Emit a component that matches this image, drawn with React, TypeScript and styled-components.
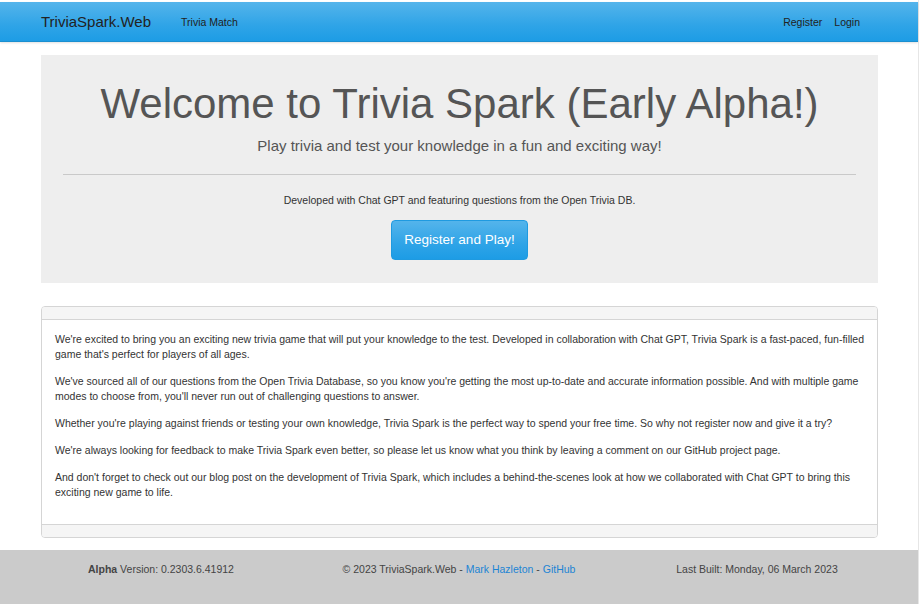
import React from "react";
import styled, { createGlobalStyle } from "styled-components";

const Global = createGlobalStyle`
  html, body { margin: 0; padding: 0; background: #fff; }
  body { font-family: "Liberation Sans", Arial, sans-serif; color: #333; }
  * { box-sizing: border-box; }
`;

const Page = styled.div`
  width: 919px;
  min-height: 604px;
  border-right: 1px solid #e6e6e6;
  padding-top: 2px;
  display: flex;
  flex-direction: column;
`;

const NavBar = styled.header`
  height: 40px;
  background: linear-gradient(to bottom, #54b4eb 0%, #2fa4e7 60%, #1d9ce5 100%);
  border-bottom: 1px solid #1a8fd0;
  box-shadow: 0 1px 2px rgba(0, 0, 0, 0.12);
  display: flex;
  align-items: center;
  padding: 0 58px 0 41px;
`;

const Brand = styled.a`
  font-size: 15px;
  color: #222;
  text-decoration: none;
  margin-right: 30px;
`;

const NavLink = styled.a`
  font-size: 10.5px;
  color: #222;
  text-decoration: none;
`;

const NavRight = styled.nav`
  margin-left: auto;
  display: flex;
  gap: 12px;
`;

const Container = styled.main`
  width: 837px;
  margin: 13px 0 0 41px;
  display: flex;
  flex-direction: column;
  gap: 23px;
`;

const Jumbotron = styled.section`
  background: #eeeeee;
  padding: 25px 22px 23px;
  display: flex;
  flex-direction: column;
  align-items: center;
  color: #555;
`;

const Title = styled.h1`
  margin: 0;
  font-size: 42px;
  font-weight: 400;
  line-height: 48px;
  color: #555;
`;

const Lead = styled.p`
  margin: 7px 0 0;
  font-size: 15px;
  line-height: 22px;
  color: #555;
`;

const Rule = styled.hr`
  width: 100%;
  border: 0;
  border-top: 1px solid #c9c9c9;
  margin: 17px 0 0;
`;

const Small = styled.p`
  margin: 17px 0 0;
  font-size: 10.5px;
  line-height: 16px;
  color: #333;
`;

const CTA = styled.button`
  margin-top: 12px;
  height: 40px;
  padding: 0 12px 1px;
  border-radius: 4px;
  border: 1px solid #1f9ae0;
  background: linear-gradient(to bottom, #54b4eb 0%, #2fa4e7 60%, #1d9ce5 100%);
  color: #fff;
  font-family: "Liberation Sans", Arial, sans-serif;
  font-size: 13.5px;
`;

const Panel = styled.section`
  border: 1px solid #d5d5d5;
  border-radius: 4px;
  background: #fff;
  display: flex;
  flex-direction: column;
  overflow: hidden;
`;

const PanelBar = styled.div<{ $top?: boolean }>`
  height: 13px;
  background: #f5f5f5;
  border-${(p) => (p.$top ? "bottom" : "top")}: 1px solid #d5d5d5;
`;

const PanelBody = styled.div`
  padding: 12px 13px 24px;
  display: flex;
  flex-direction: column;
  gap: 12px;
`;

const Para = styled.p`
  margin: 0;
  font-size: 10.5px;
  line-height: 15px;
  color: #333;
`;

const Footer = styled.footer`
  margin-top: 12px;
  background: #cbcbcb;
  height: 56px;
  display: grid;
  grid-template-columns: repeat(3, 298px);
  justify-content: center;
  padding-top: 12px;
  font-size: 10.5px;
  line-height: 14px;
  color: #444;
`;

const FootCol = styled.div`
  text-align: center;
`;

const FootLink = styled.a`
  color: #1c84d4;
  text-decoration: none;
`;

export default function App() {
  return (
    <>
      <Global />
      <Page>
        <NavBar>
          <Brand href="#">TriviaSpark.Web</Brand>
          <NavLink href="#">Trivia Match</NavLink>
          <NavRight>
            <NavLink href="#">Register</NavLink>
            <NavLink href="#">Login</NavLink>
          </NavRight>
        </NavBar>
        <Container>
          <Jumbotron>
            <Title>Welcome to Trivia Spark (Early Alpha!)</Title>
            <Lead>Play trivia and test your knowledge in a fun and exciting way!</Lead>
            <Rule />
            <Small>Developed with Chat GPT and featuring questions from the Open Trivia DB.</Small>
            <CTA>Register and Play!</CTA>
          </Jumbotron>
          <Panel>
            <PanelBar $top />
            <PanelBody>
              <Para>
                We're excited to bring you an exciting new trivia game that will put your knowledge to the test. Developed in collaboration with Chat GPT, Trivia Spark is a fast-paced, fun-filled game that's perfect for players of all ages.
              </Para>
              <Para>
                We've sourced all of our questions from the Open Trivia Database, so you know you're getting the most up-to-date and accurate information possible. And with multiple game modes to choose from, you'll never run out of challenging questions to answer.
              </Para>
              <Para>
                Whether you're playing against friends or testing your own knowledge, Trivia Spark is the perfect way to spend your free time. So why not register now and give it a try?
              </Para>
              <Para>
                We're always looking for feedback to make Trivia Spark even better, so please let us know what you think by leaving a comment on our GitHub project page.
              </Para>
              <Para>
                And don't forget to check out our blog post on the development of Trivia Spark, which includes a behind-the-scenes look at how we collaborated with Chat GPT to bring this exciting new game to life.
              </Para>
            </PanelBody>
            <PanelBar />
          </Panel>
        </Container>
        <Footer>
          <FootCol>
            <b>Alpha</b> Version: 0.2303.6.41912
          </FootCol>
          <FootCol>
            © 2023 TriviaSpark.Web - <FootLink href="#">Mark Hazleton</FootLink> - <FootLink href="#">GitHub</FootLink>
          </FootCol>
          <FootCol>Last Built: Monday, 06 March 2023</FootCol>
        </Footer>
      </Page>
    </>
  );
}
